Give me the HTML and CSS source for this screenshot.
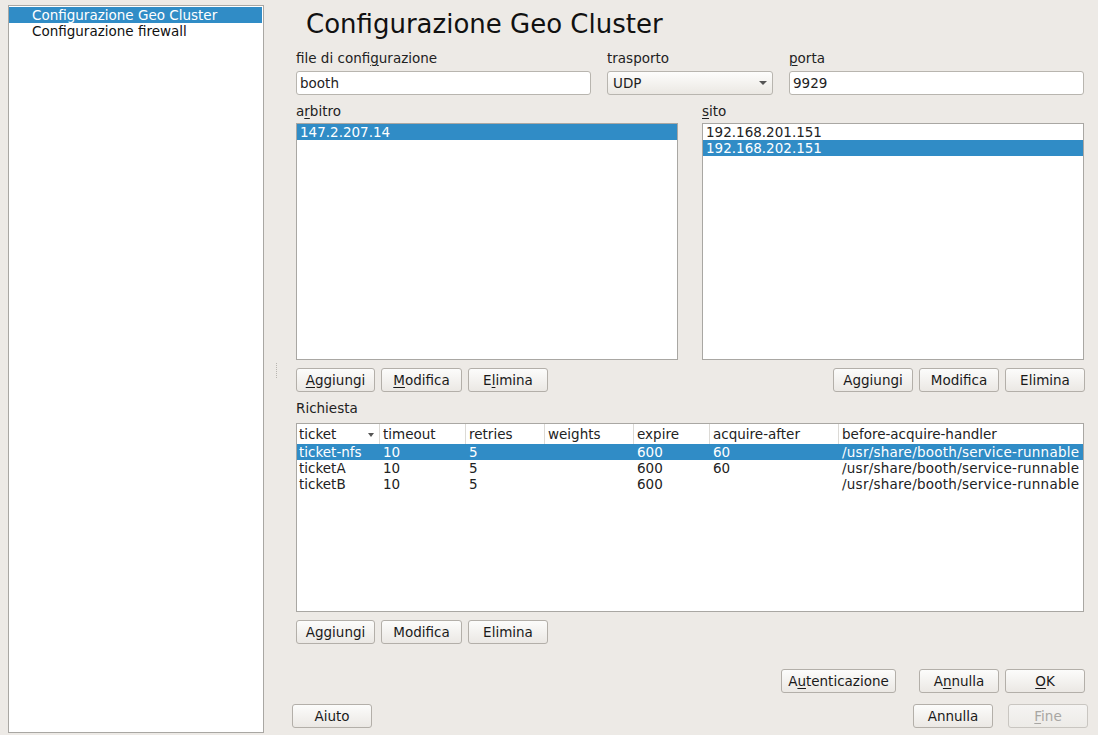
FILE: index.html
```html
<!DOCTYPE html>
<html>
<head>
<meta charset="utf-8">
<link rel="stylesheet" href="styles.css">
</head>
<body>
<div class="app">
  <div class="sidebar">
    <div class="nav-item selected">Configurazione Geo Cluster</div>
    <div class="nav-item">Configurazione firewall</div>
  </div>
  <div class="splitter"><div class="grip"></div></div>
  <div class="main">
    <div class="inner">
      <div class="title">Configurazione Geo Cluster</div>
      <div class="fields">
        <div class="field">
          <div class="label">file di confi<u>g</u>urazione</div>
          <div class="input">booth</div>
        </div>
        <div class="field">
          <div class="label">trasporto</div>
          <div class="combo"><span>UDP</span><span class="arrow"></span></div>
        </div>
        <div class="field">
          <div class="label"><u>p</u>orta</div>
          <div class="input">9929</div>
        </div>
      </div>
      <div class="lists">
        <div class="listcol">
          <div class="label label-sec">a<u>r</u>bitro</div>
          <div class="list">
            <div class="row selected">147.2.207.14</div>
          </div>
          <div class="btns">
            <div class="btn w79"><u>A</u>ggiungi</div>
            <div class="btn w81"><u>M</u>odifica</div>
            <div class="btn w80">E<u>l</u>imina</div>
          </div>
        </div>
        <div class="listcol">
          <div class="label label-sec"><u>s</u>ito</div>
          <div class="list">
            <div class="row">192.168.201.151</div>
            <div class="row selected">192.168.202.151</div>
          </div>
          <div class="btns right">
            <div class="btn w80">Aggiungi</div>
            <div class="btn w80">Modifica</div>
            <div class="btn w80">Elimina</div>
          </div>
        </div>
      </div>
      <div class="label label-req">Richiesta</div>
      <div class="table">
        <div class="thead">
          <div class="th c1">ticket<span class="sort"></span></div>
          <div class="th c2">timeout</div>
          <div class="th c3">retries</div>
          <div class="th c4">weights</div>
          <div class="th c5">expire</div>
          <div class="th c6">acquire-after</div>
          <div class="th c7">before-acquire-handler</div>
        </div>
        <div class="tr selected">
          <div class="td c1">ticket-nfs</div><div class="td c2">10</div><div class="td c3">5</div><div class="td c4"></div><div class="td c5">600</div><div class="td c6">60</div><div class="td c7 path">/usr/share/booth/service-runnable</div>
        </div>
        <div class="tr">
          <div class="td c1">ticketA</div><div class="td c2">10</div><div class="td c3">5</div><div class="td c4"></div><div class="td c5">600</div><div class="td c6">60</div><div class="td c7 path">/usr/share/booth/service-runnable</div>
        </div>
        <div class="tr">
          <div class="td c1">ticketB</div><div class="td c2">10</div><div class="td c3">5</div><div class="td c4"></div><div class="td c5">600</div><div class="td c6"></div><div class="td c7 path">/usr/share/booth/service-runnable</div>
        </div>
      </div>
      <div class="btns btns-table">
        <div class="btn w79">Aggiungi</div>
        <div class="btn w81">Modifica</div>
        <div class="btn w80">Elimina</div>
      </div>
      <div class="dialog-btns">
        <div class="btn w115">A<u>u</u>tenticazione</div>
        <div class="spacer"></div>
        <div class="btn w80">A<u>n</u>nulla</div>
        <div class="btn w80"><u>O</u>K</div>
      </div>
    </div>
    <div class="wizard-btns">
      <div class="btn w80">Aiuto</div>
      <div class="spacer"></div>
      <div class="btn w80">Annulla</div>
      <div class="btn w80 disabled"><u>F</u>ine</div>
    </div>
  </div>
</div>
</body>
</html>
```

FILE: styles.css
```css
html, body {
  margin: 0;
  padding: 0;
}
body {
  width: 1098px;
  height: 735px;
  background: #edeae6;
  font-family: "DejaVu Sans", sans-serif;
  font-size: 13.5px;
  color: #222;
  overflow: hidden;
}
u {
  text-decoration: underline;
  text-decoration-thickness: 1px;
  text-underline-offset: 2px;
}
.app {
  display: flex;
  height: 735px;
}
.sidebar {
  box-sizing: border-box;
  flex: 0 0 256px;
  width: 256px;
  margin: 5px 0 2px 8px;
  border: 1px solid #a9a7a3;
  background: #fff;
  padding-top: 1px;
}
.nav-item {
  height: 16px;
  line-height: 16px;
  padding-left: 23px;
  white-space: nowrap;
  color: #111;
}
.nav-item.selected {
  background: #308cc6;
  color: #fff;
  margin-right: 1px;
}
.splitter {
  flex: 0 0 28px;
  position: relative;
}
.grip {
  position: absolute;
  left: 12px;
  top: 363px;
  width: 1px;
  height: 16px;
  background-image: linear-gradient(#b8b5b0 50%, transparent 50%);
  background-size: 1px 2px;
}
.main {
  flex: 1;
  min-width: 0;
  display: flex;
  flex-direction: column;
  padding-right: 10px;
}
.inner {
  padding: 0 4px 0 4px;
}
.title {
  height: 48px;
  line-height: 48px;
  font-size: 26px;
  padding-left: 10px;
  color: #111;
}
.label {
  height: 16px;
  line-height: 16px;
  margin-top: 2px;
  white-space: nowrap;
}
.fields {
  display: grid;
  grid-template-columns: 295px 166px 295px;
  column-gap: 16px;
}
.field .label {
  margin-bottom: 5px;
}
.input {
  box-sizing: border-box;
  height: 24px;
  line-height: 22px;
  background: #fff;
  border: 1px solid #b8b5af;
  border-radius: 3px;
  padding-left: 3px;
}
.combo {
  box-sizing: border-box;
  height: 24px;
  line-height: 22px;
  border: 1px solid #b8b5af;
  border-radius: 3px;
  background: linear-gradient(#fdfdfc, #ebe8e3);
  padding: 0 0 0 5px;
  display: flex;
  justify-content: space-between;
  align-items: center;
}
.arrow {
  width: 0;
  height: 0;
  border-left: 4px solid transparent;
  border-right: 4px solid transparent;
  border-top: 4px solid #555;
  margin-right: 5px;
}
.lists {
  display: flex;
  justify-content: space-between;
  margin-top: 6px;
}
.listcol {
  width: 382px;
}
.label-sec {
  margin-bottom: 4px;
}
.list {
  box-sizing: border-box;
  height: 237px;
  background: #fff;
  border: 1px solid #a9a7a3;
}
.row {
  height: 16px;
  line-height: 16px;
  padding-left: 3px;
  white-space: nowrap;
}
.row.selected, .tr.selected {
  background: #308cc6;
  color: #fff;
}
.btns {
  display: flex;
  gap: 6px;
  margin-top: 8px;
}
.btns.right {
  justify-content: flex-end;
  margin-right: -1px;
}
.btn {
  box-sizing: border-box;
  height: 24px;
  line-height: 22px;
  text-align: center;
  border: 1px solid #b3afa9;
  border-radius: 3px;
  background: linear-gradient(#fcfcfb, #ebe8e4);
  color: #1a1a1a;
  white-space: nowrap;
}
.btn.disabled {
  color: #a8a6a2;
  border-color: #c9c6c1;
  background: linear-gradient(#f5f4f2, #edebe7);
}
.w79 { width: 79px; }
.w80 { width: 80px; }
.w81 { width: 81px; }
.w115 { width: 115px; }
.label-req {
  margin-top: 8px;
  margin-bottom: 7px;
}
.table {
  box-sizing: border-box;
  height: 189px;
  background: #fff;
  border: 1px solid #a9a7a3;
}
.thead {
  display: flex;
  height: 20px;
  line-height: 20px;
}
.th {
  box-sizing: border-box;
  padding-left: 2px;
  border-right: 1px solid #dcdad6;
  position: relative;
  white-space: nowrap;
}
.th.c7 { border-right: none; }
.sort {
  position: absolute;
  right: 5px;
  top: 9px;
  width: 0;
  height: 0;
  border-left: 3.5px solid transparent;
  border-right: 3.5px solid transparent;
  border-top: 4px solid #555;
}
.tr {
  display: flex;
  height: 16px;
  line-height: 16px;
}
.td {
  box-sizing: border-box;
  padding-left: 2px;
  white-space: nowrap;
  overflow: hidden;
}
.path {
  letter-spacing: 0.25px;
}
.c1 { width: 83px; flex: 0 0 83px; }
.c2 { width: 86px; flex: 0 0 86px; padding-left: 3px; }
.c3 { width: 79px; flex: 0 0 79px; padding-left: 3px; }
.c4 { width: 89px; flex: 0 0 89px; padding-left: 3px; }
.c5 { width: 76px; flex: 0 0 76px; padding-left: 3px; }
.c6 { width: 129px; flex: 0 0 129px; padding-left: 3px; }
.c7 { flex: 1; min-width: 0; padding-left: 3px; }
.btns-table {
  margin-top: 8px;
}
.dialog-btns {
  display: flex;
  gap: 6px;
  margin-top: 25px;
  padding-left: 485px;
  margin-right: -1px;
}
.dialog-btns .spacer {
  flex: 1;
}
.wizard-btns {
  display: flex;
  gap: 15px;
  margin-top: 11px;
}
.wizard-btns .spacer {
  flex: 1;
}
```
